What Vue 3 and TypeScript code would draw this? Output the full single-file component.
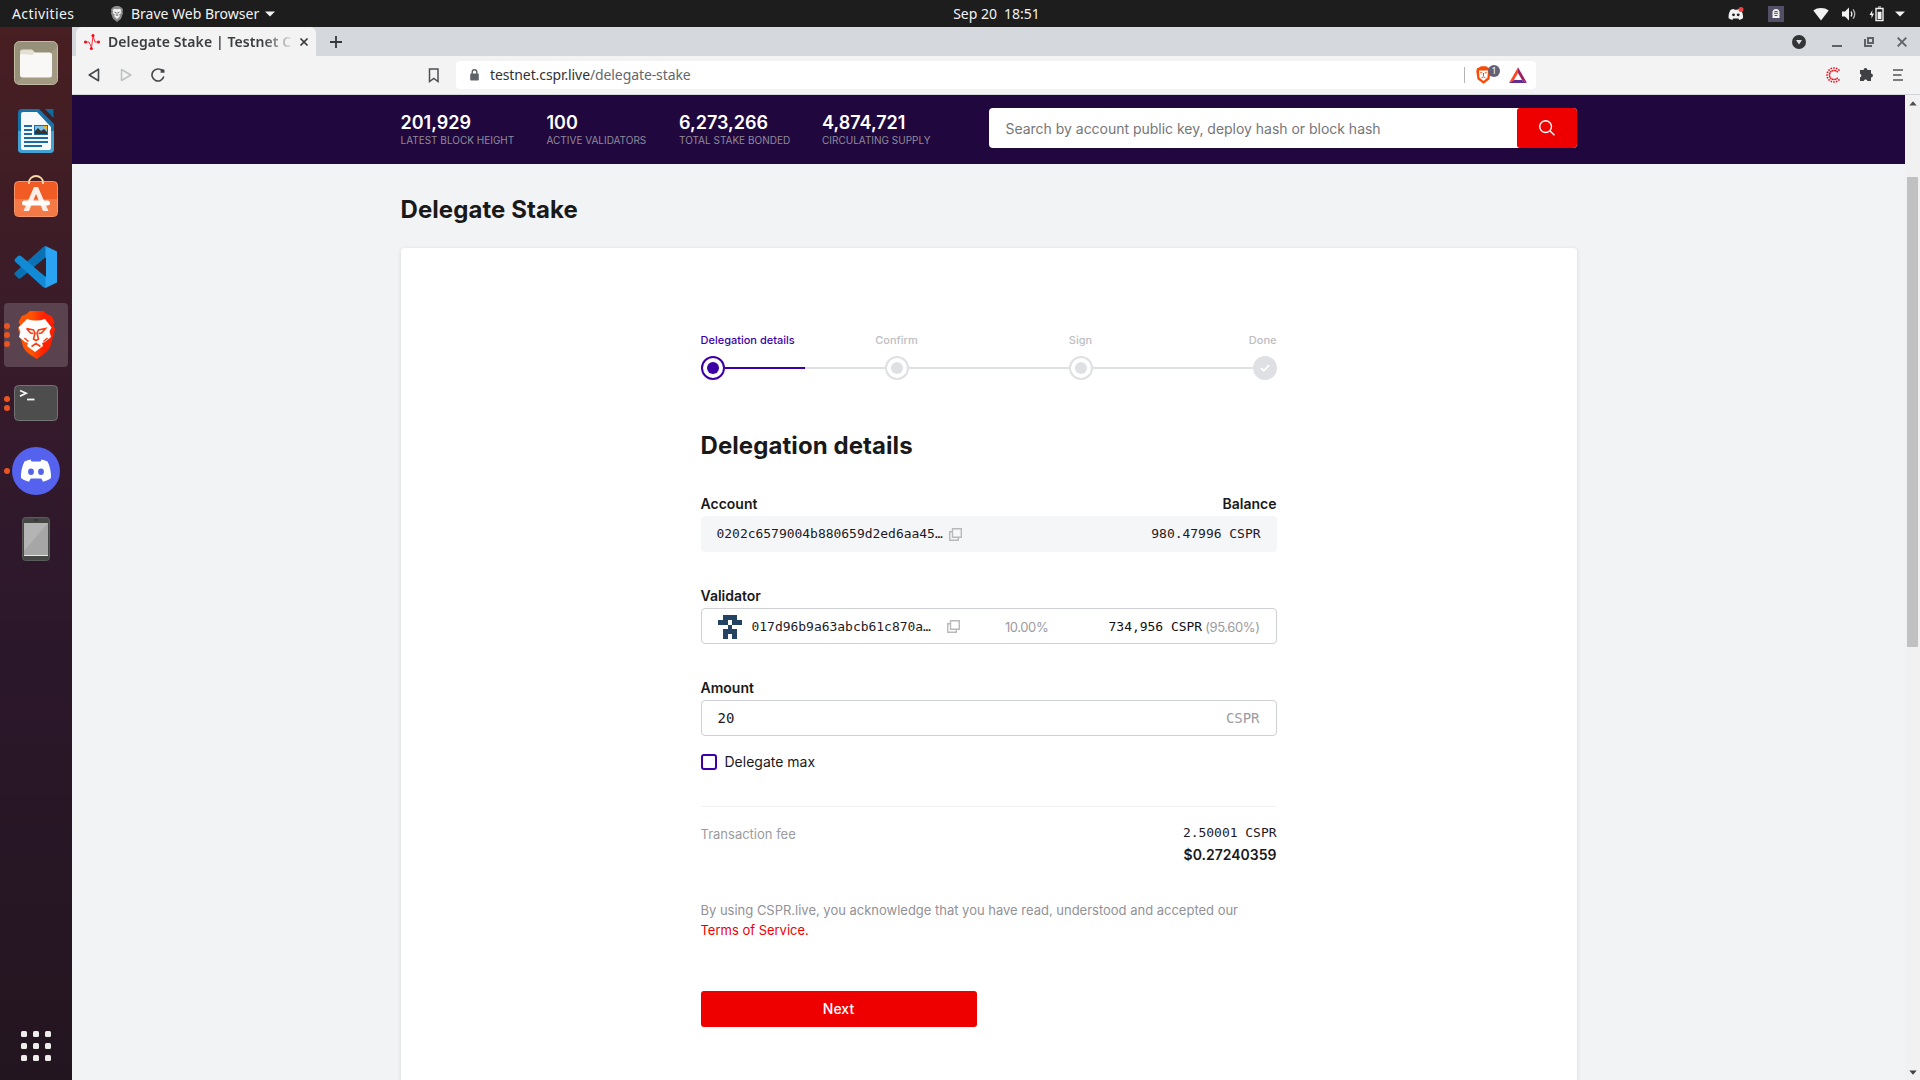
<script setup lang="ts">
interface Stat { value: string; label: string; width: number }
interface Step { label: string; align: string; state: string }

const stats: Stat[] = [
  { value: '201,929', label: 'LATEST BLOCK HEIGHT', width: 146 },
  { value: '100', label: 'ACTIVE VALIDATORS', width: 132.5 },
  { value: '6,273,266', label: 'TOTAL STAKE BONDED', width: 143 },
  { value: '4,874,721', label: 'CIRCULATING SUPPLY', width: 120 },
]

const steps: Step[] = [
  { label: 'Delegation details', align: 'start', state: 'active' },
  { label: 'Confirm', align: 'center', state: 'idle' },
  { label: 'Sign', align: 'center', state: 'idle' },
  { label: 'Done', align: 'end', state: 'done' },
]

const identicon = ['01110', '11011', '00100', '01110', '01010']
const pixels = identicon.flatMap((row, y) =>
  row.split('').map((on, x) => ({ x, y, on: on === '1' })).filter((p) => p.on),
)

const appGrid = Array.from({ length: 9 }, (_, i) => i)
const casperDots = Array.from({ length: 13 }, (_, i) => {
  const a = ((45 + i * 22.5) * Math.PI) / 180
  return { c: Math.cos(a), s: Math.sin(a) }
})
</script>

<template>
  <div class="desktop">
    <header class="topbar">
      <div class="top-left">
        <span class="activities">Activities</span>
        <svg class="top-lion" width="14" height="16" viewBox="0 0 40 48">
          <path d="M10 3 14 0h12l4 3 5 2 3 6-1 5 1 6-6 16-12 10L8 38 2 22l1-6-1-5 3-6z" fill="#8b8b8b" />
          <path d="M7 12l6-4 7 2 7-2 6 4-2 5 2 4-7 5 3 4-9 9-9-9 3-4-7-5 2-4z" fill="#f2f2f2" />
          <path d="M11 17l7 1 1 9h2l1-9 7-1-4 5h-2l1 6-4 2-4-2 1-6h-2z" fill="#777" />
        </svg>
        <span class="app-name">Brave Web Browser</span>
        <svg width="10" height="6" viewBox="0 0 10 6"><path d="M0 .5h10L5 5.5z" fill="#f2f2f2" /></svg>
      </div>
      <div class="clock"><span>Sep 20</span><span>18:51</span></div>
      <div class="top-right">
        <svg width="16" height="14" viewBox="0 0 16 14">
          <path d="M4 2.2 2.5 3C1 5.500.3 8 .6 11.200c1.200.9 2.400 1.400 3.700 1.700l.9-1.500h5.200l.9 1.500c1.300-.3 2.500-.8 3.700-1.700C15.300 8 14.500 5.500 13 3c-1.500-.8-3-1-3-1l-.5.8h-3L6 2z" fill="#f2f2f2" />
          <circle cx="5.500" cy="7.800" r="1.400" fill="#1d1d1d" /><circle cx="10.200" cy="7.800" r="1.400" fill="#1d1d1d" />
          <circle cx="13" cy="2.500" r="2.500" fill="#ef4444" />
        </svg>
        <svg class="ml24" width="16" height="16" viewBox="0 0 16 16">
          <rect width="16" height="16" fill="#524f66" />
          <path d="M4.500 12V6.500a3.500 3.500 0 0 1 7 0V12z" fill="#f2f2f2" />
          <path d="M6 7.300h4M6.300 5.600h3.400M6.500 9.500h3" stroke="#524f66" />
        </svg>
        <svg class="ml30" width="16" height="14" viewBox="0 0 16 14"><path d="M.3 3.500C4.500.2 11.500.2 15.700 3.500L8 13.500z" fill="#f2f2f2" /></svg>
        <svg class="ml12" width="16" height="14" viewBox="0 0 16 14">
          <path d="M1 4.500h3l4-4v13l-4-4H1z" fill="#f2f2f2" />
          <path d="M10 4.500q1.700 2.500 0 5" fill="none" stroke="#f2f2f2" stroke-width="1.300" />
          <path d="M12 2.300q3.500 4.700 0 9.400" fill="none" stroke="#b5b5b5" stroke-width="1.300" />
        </svg>
        <svg class="ml12" width="16" height="16" viewBox="0 0 16 16">
          <path d="M3.500 4 .5 9H2.500v3.500L5 7.500H3z" fill="#f2f2f2" />
          <path d="M7 2.500h7v12H7z" fill="none" stroke="#f2f2f2" stroke-width="1.400" />
          <path d="M9 .5h3v1H9zM8.600 5.800h3.900v7.200H8.600z" fill="#f2f2f2" />
        </svg>
        <svg class="ml10" width="10" height="6" viewBox="0 0 10 6"><path d="M0 .5h10L5 5.500z" fill="#f2f2f2" /></svg>
      </div>
    </header>

    <div class="body">
      <aside class="dock">
        <div class="dock-item">
          <svg width="48" height="48" viewBox="0 0 48 48">
            <rect x="2.500" y="2.500" width="43" height="43" rx="5" fill="#979079" stroke="#c2bba3" />
            <path d="M3 45 45 8v33a4 4 0 0 1-4 4z" fill="#a29a83" />
            <path d="M8 13a2.500 2.500 0 0 1 2.500-2.500H20l4 4V22H8z" fill="#e4dfd3" />
            <path d="M8 17.500a2.500 2.500 0 0 1 2.500-2.500L20 16l3-2.500h14.500A2.500 2.500 0 0 1 40 16v20a2.500 2.500 0 0 1-2.500 2.500h-27A2.500 2.500 0 0 1 8 36z" fill="#f9f8f6" />
          </svg>
        </div>
        <div class="dock-item">
          <svg width="48" height="48" viewBox="0 0 48 48">
            <path d="M10 2h17l15 15v25a4 4 0 0 1-4 4H10a4 4 0 0 1-4-4V6a4 4 0 0 1 4-4z" fill="#1773a8" />
            <path d="M6 24h36v18a4 4 0 0 1-4 4H10a4 4 0 0 1-4-4z" fill="#44a2d2" />
            <path d="M11 5h14l14 15v21a2 2 0 0 1-2 2H11a2 2 0 0 1-2-2V7a2 2 0 0 1 2-2z" fill="#f8f9fa" />
            <path d="M33 2h8.500v9z" fill="#14699c" />
            <path d="M12 19h8M12 23h8M12 27h8M12 31h24M12 35h24M12 39h18" stroke="#1a6da0" stroke-width="2" />
            <path d="M22 18h14v10H22z" fill="#1a6da0" /><path d="M23 19h12v8H23z" fill="#7cc2e8" />
            <path d="M23 27v-3l3-3 3 3 3-2 3 3v2z" fill="#333" /><path d="M31 19h4v4z" fill="#f1b51c" />
          </svg>
        </div>
        <div class="dock-item">
          <svg width="48" height="48" viewBox="0 0 48 48">
            <rect x="2.500" y="6.500" width="43" height="35" rx="4" fill="#f15b24" stroke="#f3946b" />
            <path d="M3 24h42v13a4 4 0 0 1-4 4H7a4 4 0 0 1-4-4z" fill="#f37946" />
            <path d="M17 9V7.500a7 6.500 0 0 1 14 0V9" fill="none" stroke="#f8d9a8" stroke-width="1.800" />
            <path d="M22 12h4l10.500 24h-5.500L24 19l-7 17h-5.500z" fill="#fceee7" />
            <rect x="10" y="25.500" width="28" height="5" rx="2.500" fill="#fff" />
          </svg>
        </div>
        <div class="dock-item">
          <svg width="48" height="48" viewBox="0 0 48 48">
            <path d="M34 3v11L9 35q-1.500 1-3 0l-3-3q-1-1.300 0-2.500L31 4.200Q32.500 3 34 3z" fill="#0b71b5" />
            <path d="M34 45V34L9 13q-1.500-1-3 0l-3 3q-1 1.300 0 2.500L31 44q1.500 1 3 1z" fill="#118bd6" />
            <path d="M33.500 3 45 8.500v31L33.500 45z" fill="#2ba3f3" />
            <path d="M34 14.500V34L22 24z" fill="#3b1d28" />
          </svg>
        </div>
        <div class="dock-item active">
          <span class="dots"><i></i><i></i><i></i></span>
          <svg width="48" height="48" viewBox="0 0 48 48">
            <defs><linearGradient id="lion" x1="0" x2="1"><stop offset=".35" stop-color="#ff5500" /><stop offset=".7" stop-color="#ff2000" /></linearGradient></defs>
            <path d="m14 3 3-3h14l3 3 5 2 3 6-1.500 3 2 4-5 18q-2 4-6 7l-7.500 5-7.500-5q-4-3-6-7l-5-18 2-4L6 11l3-6z" fill="url(#lion)" transform="translate(.6)" />
            <path d="M15 8q4 1.500 9 1.500t9-1.500l6.500 8.500-2 4 1.500 5.500-6 5-3 1 1 3-8 6-8-6 1-3-3-1-6-5 1.500-5.500-2-4z" fill="#fff" />
            <path d="M14.500 17.500 21.500 19 23 22l-1.500 6 2.500 1.500 2.500-1.500L25 22l1.500-3 7-1.500-4 4.500-3 .5M14.500 17.500l4 4.500 3 .5M12.500 27l4 3.500M35.500 27l-4 3.500M19.500 35.500l4.500-3 4.500 3" fill="none" stroke="#fb3d10" stroke-width="1.600" />
          </svg>
        </div>
        <div class="dock-item">
          <span class="dots"><i></i><i></i></span>
          <svg width="48" height="48" viewBox="0 0 48 48">
            <rect x="2.500" y="6.500" width="43" height="35" rx="4" fill="#4d4d4d" stroke="#737373" />
            <path d="m8 11.500 6 2.800-6 2.800" fill="none" stroke="#f4f4f4" stroke-width="1.800" />
            <path d="M15 20.500h7.500" stroke="#f4f4f4" stroke-width="1.800" />
          </svg>
        </div>
        <div class="dock-item">
          <span class="dots"><i></i></span>
          <svg width="48" height="48" viewBox="0 0 48 48">
            <circle cx="24" cy="24" r="24" fill="#5562ee" />
            <path d="M18.500 12.500c-2.600.5-4.600 1.200-6 2-2.500 4.500-3.800 11-3.500 16.500 2 1.800 5 3 8 3.700l1.700-3.200h10.600l1.700 3.200c3-.7 6-1.900 8-3.700.3-5.500-1-12-3.500-16.500-1.400-.8-3.400-1.500-6-2L28.500 14.500h-9z" fill="#fff" />
            <ellipse cx="19" cy="24.800" rx="2.900" ry="3.200" fill="#5562ee" /><ellipse cx="29" cy="24.800" rx="2.900" ry="3.200" fill="#5562ee" />
          </svg>
        </div>
        <div class="dock-item">
          <svg width="48" height="48" viewBox="0 0 48 48">
            <rect x="10.500" y="2.500" width="27" height="43" rx="3" fill="#454745" stroke="#5b5d5b" />
            <path d="M12 8h24v32H12z" fill="#a6a6a6" /><path d="M12 8h24L12 36z" fill="#b4b4b4" />
            <path d="M12 40.500h24" stroke="#e5e5e5" /><path d="M22 5h4" stroke="#222" />
          </svg>
        </div>
        <div class="app-grid"><i v-for="n in appGrid" :key="n"></i></div>
      </aside>

      <main class="browser">
        <div class="tabs">
          <div class="tab">
            <svg class="favicon" width="16" height="16" viewBox="0 0 16 16">
              <path d="M1.500 8H5l2.500 5.500L9 2l2 6h4" fill="none" stroke="#ff2d3b" stroke-width="1" />
              <circle cx="1.500" cy="8" r="1.500" fill="#ff0012" /><circle cx="14.500" cy="8" r="1.500" fill="#ff0012" />
              <circle cx="9" cy="1.600" r="1.500" fill="#ff0012" /><circle cx="7.300" cy="14.400" r="1.500" fill="#ff0012" />
            </svg>
            <span class="tab-title">Delegate Stake | Testnet C</span>
            <svg width="10" height="10" viewBox="0 0 10 10"><path d="m1.500 1.500 7 7m0-7-7 7" stroke="#36373a" stroke-width="1.700" /></svg>
          </div>
          <svg class="new-tab" width="12" height="12" viewBox="0 0 12 12"><path d="M6 0v12M0 6h12" stroke="#36373a" stroke-width="1.800" /></svg>
          <div class="window-controls">
            <svg width="14" height="14" viewBox="0 0 14 14"><circle cx="7" cy="7" r="7" fill="#333436" /><path d="M4 5h6l-3 4.500z" fill="#dfe1e4" /></svg>
            <svg class="minimize" width="10" height="10" viewBox="0 0 10 10"><path d="M0 9h10" stroke="#5f6266" stroke-width="2" /></svg>
            <svg class="restore" width="10" height="10" viewBox="0 0 10 10"><path d="M4 1h5v5H4zM1 2v7h7" fill="none" stroke="#5f6266" stroke-width="2" /></svg>
            <svg class="close" width="10" height="10" viewBox="0 0 10 10"><path d="m.7.7 8.600 8.600m0-8.600L.7 9.300" stroke="#5f6266" stroke-width="1.900" /></svg>
          </div>
        </div>

        <div class="toolbar">
          <svg width="12" height="14" viewBox="0 0 12 14"><path d="M10.500 1.200v11.600L1.200 7z" fill="none" stroke="#46474a" stroke-width="1.600" stroke-linejoin="round" /></svg>
          <svg class="fwd" width="12" height="14" viewBox="0 0 12 14"><path d="M1.500 1.500v11L10.800 7z" fill="none" stroke="#bfc0c2" stroke-width="1.500" stroke-linejoin="round" /></svg>
          <svg class="reload" width="14" height="14" viewBox="0 0 14 14"><path d="M12.800 8.500A6 6 0 1 1 11.200 2.700" fill="none" stroke="#46474a" stroke-width="1.600" /><path d="M9.500 4.800 10 .8l3.500 1v3z" fill="#46474a" /></svg>
          <svg class="bookmark" width="12" height="15" viewBox="0 0 12 15"><path d="M1.500 1h8.500v12.500l-4.200-3-4.300 3z" fill="none" stroke="#4f5054" stroke-width="1.500" /></svg>
          <div class="address">
            <svg width="9" height="12" viewBox="0 0 9 12"><path d="M2.200 5V3a2.300 2.300 0 0 1 4.600 0v2" fill="none" stroke="#5f6368" stroke-width="1.400" /><rect x=".2" y="4.500" width="8.600" height="7" rx="1" fill="#5f6368" /></svg>
            <span class="url"><b>testnet.cspr.live</b>/delegate-stake</span>
            <span class="divider"></span>
            <span class="shield">
              <svg width="15" height="18" viewBox="0 0 15 18">
                <path d="m3.500 1.200 1.500-1h5l1.500 1 2.500 1 .7 3-1.200 8-6 4.600-6-4.600L.3 5.200 1 2.200z" fill="#fb4a05" />
                <path d="M3 4.500h9l-.6 7.200L7.500 15l-4-3.300z" fill="#fff" />
                <path d="m4.300 6.500 2 .6M10.700 6.500l-2 .6M7.500 7v3M5.500 11.800l2-1 2 1" stroke="#fb4a05" fill="none" />
              </svg>
              <em>1</em>
            </span>
            <svg class="bat" width="18" height="16" viewBox="0 0 18 16"><path d="M9 .3 0 16l5-3 4-7z" fill="#ff4724" /><path d="M9 .3 18 16l-5-3-4-7z" fill="#9e1f63" /><path d="M0 16h18l-5-3H5z" fill="#662d91" /></svg>
          </div>
          <svg class="casper" width="16" height="16" viewBox="-8 -8 16 16">
            <g stroke="#ec0b1b" stroke-width="1.500"><path v-for="(d, i) in casperDots" :key="i" :d="`M${d.c * 3.8} ${d.s * 3.8}L${d.c * 5.3} ${d.s * 5.3}M${d.c * 6.2} ${d.s * 6.2}L${d.c * 7.8} ${d.s * 7.8}`" /></g>
          </svg>
          <svg class="puzzle" width="15" height="15" viewBox="0 0 15 15"><path d="M1 3h3.600a1.900 1.900 0 1 1 3.800 0H12v3.600a1.900 1.900 0 1 1 0 3.800V14H8.500a2 2 0 0 0-3.800 0H1v-3.500a2 2 0 0 0 0-3.800z" fill="#3f4043" /></svg>
          <svg class="menu" width="10" height="12" viewBox="0 0 10 12"><path d="M0 1h10M0 6h8.500M0 11h10" stroke="#55565a" stroke-width="1.700" /></svg>
        </div>

        <div class="viewport">
          <div class="page">
            <div class="site-header">
              <div class="container header-row">
                <div class="stats">
                  <div v-for="s in stats" :key="s.label" class="stat" :style="{ width: s.width + 'px' }">
                    <strong>{{ s.value }}</strong>
                    <small>{{ s.label }}</small>
                  </div>
                </div>
                <div class="search">
                  <span class="search-input">Search by account public key, deploy hash or block hash</span>
                  <button class="search-btn">
                    <svg width="16" height="16" viewBox="0 0 16 16"><circle cx="6.600" cy="6.600" r="5.900" fill="none" stroke="#fff" stroke-width="1.400" /><path d="m10.800 10.800 4.700 4.500" stroke="#fff" stroke-width="1.500" /></svg>
                  </button>
                </div>
              </div>
            </div>

            <div class="container">
              <h1>Delegate Stake</h1>
              <section class="card">
                <div class="form">
                  <div class="step-labels">
                    <span v-for="s in steps" :key="s.label" :class="[s.align, s.state]">{{ s.label }}</span>
                  </div>
                  <div class="stepper">
                    <template v-for="(s, i) in steps" :key="s.label">
                      <span v-if="i" class="line" :class="{ half: i === 1 }"></span>
                      <span class="node" :class="s.state">
                        <svg v-if="s.state === 'done'" width="10" height="8" viewBox="0 0 10 8"><path d="m.8 3.800 3 3L9.200 1" fill="none" stroke="#fff" stroke-width="1.700" /></svg>
                        <i v-else></i>
                      </span>
                    </template>
                  </div>

                  <h2>Delegation details</h2>

                  <div class="labels"><span>Account</span><span>Balance</span></div>
                  <div class="box filled">
                    <span class="mono">0202c6579004b880659d2ed6aa45…</span>
                    <svg class="copy" width="13" height="13" viewBox="0 0 13 13"><path d="M3.500.7h8.800v8.600H3.500z" fill="#f6f7f8" stroke="#b9b9bc" stroke-width="1.400" /><path d="M3 3.700H.7v8.600h8.600V10" fill="none" stroke="#b9b9bc" stroke-width="1.400" /></svg>
                    <span class="mono push">980.47996 CSPR</span>
                  </div>

                  <div class="labels next"><span>Validator</span></div>
                  <div class="box outlined">
                    <svg class="identicon" width="24" height="24" viewBox="0 0 5 5" shape-rendering="crispEdges"><rect v-for="p in pixels" :key="`${p.x}-${p.y}`" :x="p.x" :y="p.y" width="1" height="1" fill="#244363" /></svg>
                    <span class="mono validator">017d96b9a63abcb61c870a…</span>
                    <svg class="copy far" width="13" height="13" viewBox="0 0 13 13"><path d="M3.500.7h8.800v8.600H3.500z" fill="#fff" stroke="#b9b9bc" stroke-width="1.400" /><path d="M3 3.700H.7v8.600h8.600V10" fill="none" stroke="#b9b9bc" stroke-width="1.400" /></svg>
                    <span class="pct rate">10.00%</span>
                    <span class="mono push strong">734,956 CSPR</span>
                    <span class="pct share">(95.60%)</span>
                  </div>

                  <div class="labels next"><span>Amount</span></div>
                  <div class="box outlined amount">
                    <span class="mono">20</span>
                    <span class="mono push unit">CSPR</span>
                  </div>
                  <div class="check"><i></i><span>Delegate max</span></div>

                  <div class="fee">
                    <span class="fee-label">Transaction fee</span>
                    <div class="fee-values"><span class="mono">2.50001 CSPR</span><strong>$0.27240359</strong></div>
                  </div>

                  <p class="terms">By using CSPR.live, you acknowledge that you have read, understood and accepted our <a>Terms of Service.</a></p>
                  <button class="submit">Next</button>
                </div>
              </section>
            </div>
          </div>
          <div class="scrollbar">
            <svg width="8" height="5" viewBox="0 0 8 5"><path d="M.3 4.500h7.400L4 .3z" fill="#505050" /></svg>
            <span class="thumb"></span>
            <svg class="down" width="8" height="5" viewBox="0 0 8 5"><path d="M.3.5h7.400L4 4.700z" fill="#404040" /></svg>
          </div>
        </div>
      </main>
    </div>
  </div>
</template>

<style>
html, body { margin: 0; overflow: hidden; }
</style>

<style scoped>
* { box-sizing: border-box; }
svg { display: block; flex: none; }
.desktop { width: 1920px; height: 1080px; display: flex; flex-direction: column; overflow: hidden; font-family: Inter, "Open Sans", sans-serif; }
.topbar { height: 27px; flex: none; display: flex; align-items: center; background: #1d1d1d; color: #f2f2f2; font: 14px/26px "Noto Sans", sans-serif; padding: 0 15px 0 12px; }
.top-left, .top-right { flex: 1; display: flex; align-items: center; }
.top-right { justify-content: flex-end; }
.activities { letter-spacing: .4px; width: 98px; }
.app-name { margin: 0 6px 0 7px; }
.clock { display: flex; gap: 7px; margin-left: 76px; }
.ml24 { margin-left: 24px; }
.ml30 { margin-left: 29px; }
.ml12 { margin-left: 12px; }
.ml10 { margin-left: 10px; }

.body { flex: 1; display: flex; min-height: 0; }
.dock { width: 72px; flex: none; padding: 4px; display: flex; flex-direction: column; gap: 4px; background: linear-gradient(#481f22 0, #3c1c27 22%, #32192c 42%, #2b172a 60%, #23151f 100%); }
.dock-item { position: relative; height: 64px; flex: none; display: flex; align-items: center; justify-content: center; border-radius: 4px; }
.dock-item.active { background: #5a424f; }
.dots { position: absolute; left: 0; top: 0; bottom: 0; display: flex; flex-direction: column; justify-content: center; gap: 3px; }
.dots i { width: 6px; height: 6px; border-radius: 50%; background: #e95420; }
.app-grid { margin: auto 0 15px; align-self: center; display: grid; grid-template-columns: repeat(3, 6px); gap: 6px; }
.app-grid i { width: 6px; height: 6px; border-radius: 1.500px; background: #eeeeec; }

.browser { flex: 1; min-width: 0; display: flex; flex-direction: column; }
.tabs { height: 29px; flex: none; display: flex; align-items: center; background: #d5d8dd; padding-left: 4px; }
.tab { width: 240px; height: 29px; display: flex; align-items: center; gap: 8px; padding: 0 7px 0 8px; background: #f3f3f3; border-radius: 6px 6px 0 0; }
.tab-title { width: 184px; margin-right: -1px; overflow: hidden; white-space: nowrap; font: 600 14px/28px "Noto Sans", sans-serif; letter-spacing: .08px; color: #3c3d40; -webkit-mask-image: linear-gradient(90deg, #000 155px, transparent 186px); mask-image: linear-gradient(90deg, #000 155px, transparent 186px); }
.new-tab { margin-left: 14px; }
.window-controls { margin-left: auto; display: flex; align-items: center; padding-right: 13px; }
.minimize { margin-left: 26px; }
.restore { margin-left: 22px; }
.close { margin-left: 23px; }

.toolbar { height: 39px; flex: none; display: flex; align-items: center; background: #f3f3f3; border-bottom: 1px solid #d4d5d9; padding-left: 16px; }
.fwd { margin-left: 20px; }
.reload { margin-left: 19px; }
.bookmark { margin-left: 263px; }
.address { margin-left: 16px; width: 1080px; height: 28px; display: flex; align-items: center; background: #fff; border-radius: 4px; padding-left: 14px; }
.url { margin-left: 11px; font: 14px/26px "Noto Sans", sans-serif; letter-spacing: -.1px; color: #66676b; }
.url b { font-weight: 400; color: #333; }
.divider { margin-left: auto; width: 1px; height: 16px; background: #b4b5b9; }
.shield { position: relative; margin-left: 11px; width: 15px; }
.shield em { position: absolute; left: 12px; top: -1px; width: 12px; height: 12px; border-radius: 6px; background: #636178; color: #fff; font: 9px/12px "Noto Sans", sans-serif; text-align: center; }
.bat { margin: 0 9px 0 18px; }
.casper { margin-left: 290px; }
.puzzle { margin-left: 17px; margin-bottom: 1px; }
.menu { margin-left: 19px; }

.viewport { flex: 1; display: flex; min-height: 0; }
.page { flex: 1; background: #f2f3f5; overflow: hidden; }
.container { width: 1176px; margin: 0 auto; }
.site-header { height: 69px; background: #20083f; }
.header-row { display: flex; justify-content: space-between; padding-top: 13px; }
.stats { display: flex; padding-top: 5px; }
.stat { display: flex; flex-direction: column; white-space: nowrap; }
.stat strong { font-size: 18px; font-weight: 600; line-height: 20px; color: #fff; }
.stat small { font-size: 10px; line-height: 14px; color: #8f8b99; }
.search { width: 588px; height: 40px; display: flex; border-radius: 4px; overflow: hidden; background: #fff; }
.search-input { flex: 1; padding-left: 17px; font-size: 14px; line-height: 41px; letter-spacing: -.02px; color: #76767a; }
.search-btn { width: 60px; border: 0; border-radius: 3px; background: #ee0000; display: flex; align-items: center; justify-content: center; padding: 0; }

h1, h2 { margin: 0; font-size: 24px; line-height: 32px; font-weight: 700; letter-spacing: .07px; color: #1a1919; }
h1 { margin: 30px 0 22px; }
.card { height: 860px; background: #fff; border-radius: 4px; box-shadow: 0 1px 4px rgba(20, 20, 40, .12); padding-top: 84px; }
.form { width: 576px; margin: 0 auto; }
.step-labels { display: flex; justify-content: space-between; font-size: 11px; line-height: 16px; font-weight: 500; color: #bdbdc2; }
.step-labels span { width: 24px; display: flex; white-space: nowrap; }
.step-labels .center { justify-content: center; }
.step-labels .end { justify-content: flex-end; }
.step-labels .active { color: #3d00a6; }
.stepper { display: flex; align-items: center; margin-top: 8px; }
.line { flex: 1; height: 2px; background: #dfe0e4; }
.line.half { background: linear-gradient(90deg, #3d00a6 50%, #dfe0e4 50%); }
.node { width: 24px; height: 24px; border-radius: 50%; border: 2px solid #dfe0e4; display: flex; align-items: center; justify-content: center; }
.node i { width: 12px; height: 12px; border-radius: 50%; background: #dfe0e4; }
.node.active { border-color: #3d00a6; }
.node.active i { background: #3d00a6; }
.node.done { background: #dfe0e4; }
h2 { margin: 50px 0 32px; }

.labels { display: flex; justify-content: space-between; font-size: 14px; line-height: 20px; font-weight: 600; color: #1a1919; margin-bottom: 2px; }
.labels.next { margin-top: 34px; }
.box { height: 36px; display: flex; align-items: center; border-radius: 4px; padding: 0 16px; }
.filled { background: #f5f6f8; }
.outlined { border: 1px solid #cfd0d5; background: #fff; }
.mono { font: 13px/22px "DejaVu Sans Mono", "Liberation Mono", monospace; letter-spacing: -.026px; color: #1f1a1f; white-space: pre; }
.push { margin-left: auto; }
.copy { margin-left: 6px; }
.identicon { margin-top: 1px; }
.validator { margin-left: 10px; padding-top: 1px; }
.copy.far { margin-left: 16px; }
.rate { margin-left: 45px; }
.pct { font-size: 13px; letter-spacing: -.4px; color: #9b9ba0; padding-top: 2px; }
.strong { color: #120e14; padding-top: 2px; }
.share { margin: 0 0 0 3px; }
.amount .mono { font-size: 14px; }
.amount .unit { color: #9b9ba0; }
.check { display: flex; align-items: center; gap: 8px; margin-top: 16px; font-size: 14px; line-height: 20px; color: #1a1919; }
.check i { width: 16px; height: 16px; border: 2px solid #3d00a6; border-radius: 3px; }
.fee { margin-top: 34px; border-top: 1px solid #f0f1f3; padding-top: 15px; display: flex; justify-content: space-between; height: 93px; }
.fee-label { font-size: 13px; line-height: 24px; color: #9b9ba0; }
.fee-values { display: flex; flex-direction: column; align-items: flex-end; }
.fee-values strong { font-size: 14px; line-height: 22px; font-weight: 600; color: #1a1919; }
.terms { margin: 1px 0 0; font-size: 13px; line-height: 20px; letter-spacing: -.01px; color: #929297; }
.terms a { display: block; color: #ee0000; }
.submit { display: block; margin-top: 51px; width: 276px; height: 36px; padding: 0; border: 0; border-radius: 3px; background: #ee0000; color: #fff; font: 500 14px/36px Inter, sans-serif; }

.scrollbar { width: 15px; flex: none; background: #f1f1f1; display: flex; flex-direction: column; align-items: center; padding: 6px 0 5px; }
.thumb { width: 11px; height: 470px; margin-top: 71px; background: #c1c1c1; }
.down { margin-top: auto; }
</style>
